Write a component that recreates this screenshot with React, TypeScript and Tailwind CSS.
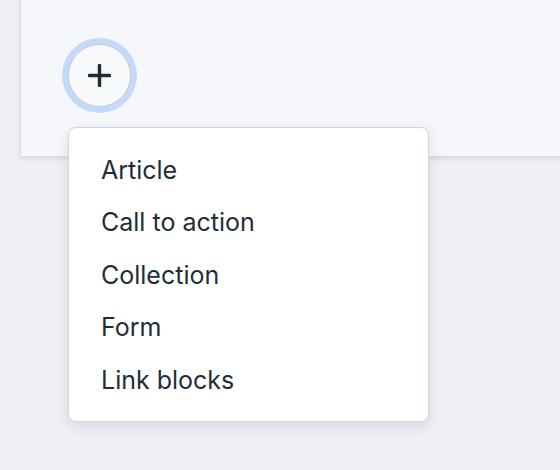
import React from "react";

const items = ["Article", "Call to action", "Collection", "Form", "Link blocks"];

export default function App() {
  return (
    <div
      className="relative h-[470px] w-[560px] overflow-hidden bg-[#eef0f5]"
      style={{ fontFamily: "Inter, 'Liberation Sans', sans-serif" }}
    >
      {/* Card */}
      <div className="ml-5 h-[157px] w-[560px] border-b border-l border-[#d9dce4] bg-[#f6f7fb] shadow-[0_2px_4px_rgba(30,40,70,0.12)]">
        <div className="pl-[47px] pt-[44px]">
          <button
            type="button"
            className="flex size-[63px] items-center justify-center rounded-full border border-[#c9cacd] bg-[#f8f9fa] text-[#1c2c36] shadow-[0_0_0_6px_#c3dafb]"
          >
            <svg width="23" height="23" viewBox="0 0 23 23" fill="none">
              <path
                d="M11.5 1.5v20M1.5 11.5h20"
                stroke="currentColor"
                strokeWidth="3.4"
                strokeLinecap="round"
              />
            </svg>
          </button>
        </div>
      </div>

      {/* Dropdown menu */}
      <div className="absolute left-[68px] top-[127px] w-[361px] rounded-lg border border-[#d3d5db] bg-white pt-[16px] pb-[14px] shadow-[0_4px_14px_rgba(30,40,70,0.12)]">
        {items.map((item) => (
          <div
            key={item}
            className="flex h-[52.5px] items-center px-8 text-[25px] leading-none text-[#1e2e39]"
          >
            {item}
          </div>
        ))}
      </div>
    </div>
  );
}
